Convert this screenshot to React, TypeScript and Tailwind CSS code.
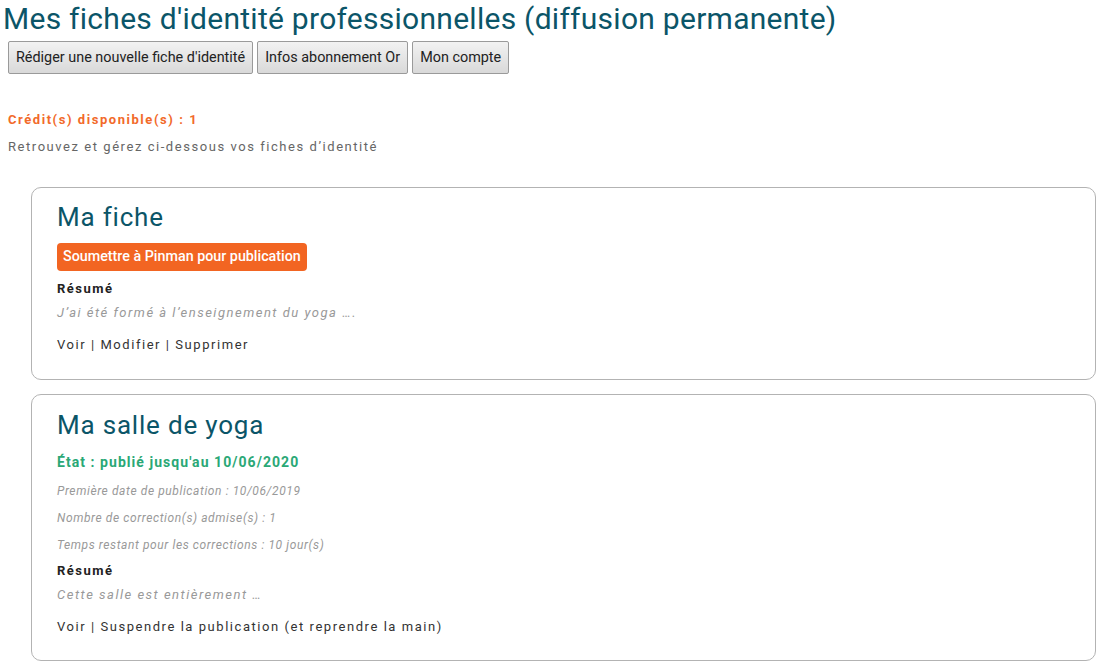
export default function App() {
  return (
    <div className="min-h-screen bg-white font-['Roboto',sans-serif] text-[#333]">
      <h1 className="pl-[3px] pt-[1px] text-[30px] leading-[36px] font-normal tracking-[0.27px] text-[#0b5568]">
        Mes fiches d'identité professionnelles (diffusion permanente)
      </h1>

      {/* Action buttons */}
      <div className="mt-[4px] flex gap-[4px] pl-[8px]">
        <button className="h-[33px] rounded-[2px] border border-[#9a9a9a] bg-gradient-to-b from-[#f2f2f2] to-[#d9d9d9] px-[7px] text-[14.4px] text-[#222]">
          Rédiger une nouvelle fiche d'identité
        </button>
        <button className="h-[33px] rounded-[2px] border border-[#9a9a9a] bg-gradient-to-b from-[#f2f2f2] to-[#d9d9d9] px-[7px] text-[14.4px] text-[#222]">
          Infos abonnement Or
        </button>
        <button className="h-[33px] rounded-[2px] border border-[#9a9a9a] bg-gradient-to-b from-[#f2f2f2] to-[#d9d9d9] px-[7px] text-[14.4px] text-[#222]">
          Mon compte
        </button>
      </div>

      <p className="mt-[36px] pl-[8px] text-[13px] font-bold tracking-[1.55px] text-[#f26a2a]">
        Crédit(s) disponible(s) : 1
      </p>
      <p className="mt-[7px] pl-[8px] text-[13px] tracking-[1.55px] text-[#666]">
        Retrouvez et gérez ci-dessous vos fiches d’identité
      </p>

      <div className="mt-[31px] flex flex-col gap-[14px] pl-[31px] pr-[6px]">
        {/* Card 1 */}
        <div className="h-[193px] rounded-[10px] border border-[#b3b3b3] px-[25px] pt-[13px]">
          <h2 className="text-[26px] leading-[32px] tracking-[0.8px] text-[#0b5568]">Ma fiche</h2>
          <button className="mt-[10px] h-[28px] rounded-[4px] bg-[#f26522] px-[6px] text-[14.3px] font-medium text-white">
            Soumettre à Pinman pour publication
          </button>
          <p className="mt-[9px] text-[13px] leading-[18px] font-bold tracking-[1.5px] text-[#222]">Résumé</p>
          <p className="mt-[6px] text-[13px] leading-[18px] italic tracking-[1.5px] text-[#999]">
            J’ai été formé à l’enseignement du yoga ….
          </p>
          <p className="mt-[14px] text-[13px] leading-[18px] tracking-[1.55px] text-[#333]">
            Voir | Modifier | Supprimer
          </p>
        </div>

        {/* Card 2 */}
        <div className="h-[267px] rounded-[10px] border border-[#b3b3b3] px-[25px] pt-[14px]">
          <h2 className="text-[26px] leading-[32px] tracking-[0.8px] text-[#0b5568]">Ma salle de yoga</h2>
          <p className="mt-[11px] text-[14px] leading-[20px] font-bold tracking-[1.05px] text-[#2aa876]">
            État : publié jusqu'au 10/06/2020
          </p>
          <p className="mt-[10px] text-[12px] leading-[18px] italic tracking-[0.6px] text-[#999]">
            Première date de publication : 10/06/2019
          </p>
          <p className="mt-[9px] text-[12px] leading-[18px] italic tracking-[0.6px] text-[#999]">
            Nombre de correction(s) admise(s) : 1
          </p>
          <p className="mt-[9px] text-[12px] leading-[18px] italic tracking-[0.6px] text-[#999]">
            Temps restant pour les corrections : 10 jour(s)
          </p>
          <p className="mt-[8px] text-[13px] leading-[18px] font-bold tracking-[1.5px] text-[#222]">Résumé</p>
          <p className="mt-[6px] text-[13px] leading-[18px] italic tracking-[1.5px] text-[#999]">
            Cette salle est entièrement …
          </p>
          <p className="mt-[14px] text-[13px] leading-[18px] tracking-[1.55px] text-[#333]">
            Voir | Suspendre la publication (et reprendre la main)
          </p>
        </div>
      </div>
    </div>
  );
}
